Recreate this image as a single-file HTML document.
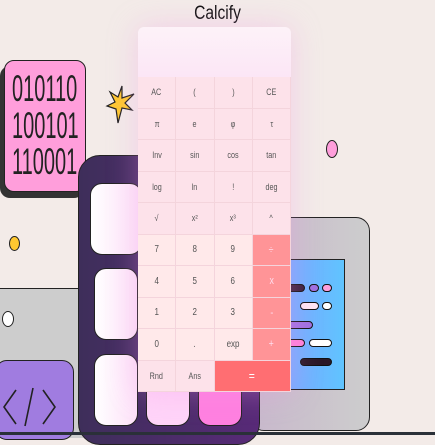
<!DOCTYPE html>
<html><head><style>
*{margin:0;padding:0;box-sizing:border-box}
body{width:435px;height:435px;overflow:hidden;background:#f3ebe8;position:relative;font-family:"Liberation Sans",sans-serif}
.a{position:absolute}
.calc{position:absolute;left:138px;top:27px;width:153px;height:365px;border-radius:6px 6px 0 0;overflow:hidden;box-shadow:0 0 30px rgba(240,150,230,.35)}
.disp{height:50px;background:linear-gradient(#fdf2f8,#fce6f6)}
.grid{display:grid;grid-template-columns:repeat(4,1fr);grid-auto-rows:31.5px}
.grid div{display:flex;align-items:center;justify-content:center;font-size:9px;color:#555;border-right:1px solid #f4d4dc;border-bottom:1px solid #f4d4dc;background:#fde2ea}
.grid div span{display:inline-block;transform:scaleX(.8)}
.grid .n{background:#ffe9ea;font-size:10px}
.grid .o{background:#ff9497;color:#fde;font-size:11px}
.grid .eq{background:#ff6e72;color:#fff;grid-column:span 2;font-size:13px}
</style></head><body>
<div class="a" style="left:0;top:3px;width:435px;text-align:center;font-size:19px;color:#111;"><span style="display:inline-block;transform:scaleX(.82)">Calcify</span></div>
<!-- binary box -->
<div class="a" style="left:0px;top:66px;width:84px;height:132px;background:#333;border-radius:10px"></div>
<div class="a" style="left:4px;top:60px;width:82px;height:132px;background:#ff9edb;border:1.5px solid #222;border-radius:10px;overflow:hidden"></div>
<div class="a" style="left:12px;top:71px;font-family:'Liberation Sans',sans-serif;font-size:37px;line-height:36.5px;color:#222;transform:scaleX(.54);transform-origin:0 0;white-space:nowrap">010110<br>100101<br>110001</div>
<!-- star -->
<svg class="a" style="left:104px;top:84px" width="32" height="42" viewBox="0 0 32 42"><polygon points="18,2 18,14 30,10 21,19 28,26 18,24 14,39 12,25 3,22 11,18 6,8 14,13" fill="#ffc830" stroke="#222" stroke-width="1.2"/></svg>
<div class="a" style="left:9px;top:236px;width:11px;height:15px;border-radius:50%;background:#ffc830;border:1.5px solid #222"></div>
<div class="a" style="left:326px;top:140px;width:12px;height:18px;border-radius:50%;background:#ff9edb;border:1.5px solid #222"></div>
<!-- left gray -->
<div class="a" style="left:-5px;top:288px;width:90px;height:150px;background:#cdcdcd;border-top:1.5px solid #222"></div>
<div class="a" style="left:2px;top:311px;width:12px;height:16px;border-radius:50%;background:#fff;border:1.5px solid #222"></div>
<div class="a" style="left:-5px;top:360px;width:79px;height:80px;background:#a07ce0;border:1.5px solid #222;border-radius:12px"></div>
<svg class="a" style="left:0;top:382px" width="60" height="50" viewBox="0 0 60 50"><path d="M16,8 L4,25 L16,42 M33,6 L25,44 M43,8 L55,25 L43,42" fill="none" stroke="#222" stroke-width="1.6"/></svg>
<!-- right gray -->
<div class="a" style="left:250px;top:217px;width:120px;height:214px;background:linear-gradient(90deg,#c8b8cc,#cdcdcd);border:1.5px solid #222;border-radius:14px"></div>
<div class="a" style="left:285px;top:259px;width:60px;height:131px;background:linear-gradient(90deg,#7aa8ff,#60c4ff);border:1.5px solid #222"></div>
<div class="a" style="left:280px;top:284px;width:25px;height:8px;background:#3a1e3a;border:1.2px solid #111;border-radius:4px"></div>
<div class="a" style="left:309px;top:284px;width:10px;height:8px;background:#a070e0;border:1.2px solid #111;border-radius:4px"></div>
<div class="a" style="left:322px;top:284px;width:10px;height:8px;background:#ff9edb;border:1.2px solid #111;border-radius:4px"></div>
<div class="a" style="left:300px;top:302px;width:19px;height:8px;background:#ffe6f4;border:1.2px solid #111;border-radius:4px"></div>
<div class="a" style="left:322px;top:302px;width:10px;height:8px;background:#fff;border:1.2px solid #111;border-radius:4px"></div>
<div class="a" style="left:280px;top:321px;width:33px;height:8px;background:#a070e0;border:1.2px solid #111;border-radius:4px"></div>
<div class="a" style="left:280px;top:339px;width:25px;height:8px;background:#ff80d8;border:1.2px solid #111;border-radius:4px"></div>
<div class="a" style="left:309px;top:339px;width:23px;height:8px;background:#fff;border:1.2px solid #111;border-radius:4px"></div>
<div class="a" style="left:300px;top:358px;width:32px;height:8px;background:#2a1828;border:1.2px solid #111;border-radius:4px"></div>
<!-- purple device -->
<div class="a" style="left:78px;top:155px;width:182px;height:290px;background:linear-gradient(90deg,#3e2e5a,#582a78);border:1.5px solid #222;border-radius:22px"></div>
<div class="a" style="left:90px;top:183px;width:52px;height:72px;background:linear-gradient(90deg,#fff,#fde0f8);border:1.5px solid #222;border-radius:12px"></div>
<div class="a" style="left:94px;top:268px;width:44px;height:72px;background:linear-gradient(90deg,#fff,#fde0f8);border:1.5px solid #222;border-radius:12px"></div>
<div class="a" style="left:94px;top:354px;width:44px;height:72px;background:linear-gradient(90deg,#fff,#fde0f8);border:1.5px solid #222;border-radius:12px"></div>
<div class="a" style="left:146px;top:354px;width:44px;height:72px;background:#ffd4f8;border:1.5px solid #222;border-radius:12px"></div>
<div class="a" style="left:198px;top:354px;width:44px;height:72px;background:#ff80e0;border:1.5px solid #222;border-radius:12px"></div>
<div class="a" style="left:0;top:432px;width:435px;height:3px;background:#2a3038"></div>
<!-- calculator -->
<div class="calc">
<div class="disp"></div>
<div class="grid">
<div><span>AC</span></div><div><span>(</span></div><div><span>)</span></div><div><span>CE</span></div>
<div><span>π</span></div><div><span>e</span></div><div><span>φ</span></div><div><span>τ</span></div>
<div><span>Inv</span></div><div><span>sin</span></div><div><span>cos</span></div><div><span>tan</span></div>
<div><span>log</span></div><div><span>ln</span></div><div><span>!</span></div><div><span>deg</span></div>
<div><span>√</span></div><div><span>x²</span></div><div><span>x³</span></div><div><span>^</span></div>
<div class="n"><span>7</span></div><div class="n"><span>8</span></div><div class="n"><span>9</span></div><div class="o"><span>÷</span></div>
<div class="n"><span>4</span></div><div class="n"><span>5</span></div><div class="n"><span>6</span></div><div class="o"><span>x</span></div>
<div class="n"><span>1</span></div><div class="n"><span>2</span></div><div class="n"><span>3</span></div><div class="o"><span>-</span></div>
<div class="n"><span>0</span></div><div class="n"><span>.</span></div><div class="n"><span>exp</span></div><div class="o"><span>+</span></div>
<div><span>Rnd</span></div><div><span>Ans</span></div><div class="eq"><span>=</span></div>
</div></div>
</body></html>
